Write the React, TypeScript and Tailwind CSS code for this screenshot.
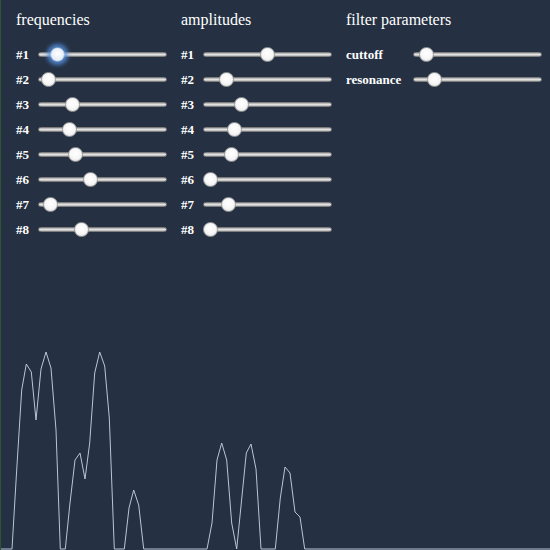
import React from 'react';

const freqs = [12, 3, 27, 24, 30, 45, 5, 36];
const amps = [57, 16, 31, 24, 21, 0, 18, 0];
const filters = [
    { label: 'cuttoff', pos: 6 },
    { label: 'resonance', pos: 14 },
];

// spectrum points, x / y in page pixels (graph origin at y=350)
const spectrum: [number, number][] = [
    [0, 549], [11, 549], [15.7, 470], [20.7, 390], [25.3, 364], [30.3, 372], [35, 420], [40, 369],
    [45, 352], [50, 368], [55, 430], [59.3, 549], [64.3, 549], [69, 503], [74, 460], [79, 453],
    [84, 479], [88.7, 443], [93.7, 373], [98.7, 352], [103.7, 366], [108.3, 418], [113.3, 549],
    [123.3, 549], [128, 508], [132.7, 490], [137.7, 505], [142.7, 549], [206, 549], [211, 523],
    [216, 460], [220.7, 443], [225.7, 460], [230.7, 523], [235.7, 549], [240.3, 503], [245.3, 453],
    [250, 444], [255, 469], [260, 549], [274.3, 549], [279.3, 498], [284, 467], [289, 473],
    [294, 512], [299, 517], [303.7, 549], [550, 549],
];

const Slider = ({ pos, focused }: { pos: number; focused?: boolean }) => (
    <div className="relative shrink-0 w-[129px] h-[15px] flex items-center">
        <div className="w-full h-[5px] rounded-full border border-[#7d7d7d] bg-[linear-gradient(to_bottom,#a9a9a9_0%,#e2e2e2_50%,#b4b4b4_100%)]"></div>
        <div
            className={
                focused
                    ? 'absolute top-0 w-[15px] h-[15px] rounded-full border border-[#8fb4e6] bg-[radial-gradient(circle_at_50%_45%,#ffffff_0%,#e8eef8_60%,#c9d6ea_100%)] shadow-[0_0_4px_3px_rgba(86,146,228,0.85)]'
                    : 'absolute top-0 w-[15px] h-[15px] rounded-full border border-[#9a9a9a] bg-[radial-gradient(circle_at_50%_40%,#ffffff_0%,#f6f6f6_55%,#d6d6d6_100%)]'
            }
            style={{ left: pos }}
        ></div>
    </div>
);

const Column = ({ title, wide, children }: { title: string; wide?: boolean; children: React.ReactNode }) => (
    <div className={wide ? 'flex-1 flex flex-col' : 'w-[165px] shrink-0 flex flex-col'}>
        <div className="text-[16px] leading-[18px] text-white">{title}</div>
        <div className="mt-[13px] flex flex-col">{children}</div>
    </div>
);

export default function App() {
    const d = spectrum.map(([x, y], i) => `${i === 0 ? 'M' : 'L'}${x} ${y - 350}`).join(' ');

    return (
        <div className="w-[550px] h-[550px] bg-[#253142] border-l border-[#2a5636] flex flex-col overflow-hidden" style={{ fontFamily: '"Liberation Serif", "Times New Roman", serif' }}>
            <div className="flex pl-[15px] pt-[11px]">
                <Column title="frequencies">
                    {freqs.map((p, i) => (
                        <div key={i} className="h-[25px] flex items-center">
                            <span className="w-[22px] shrink-0 text-[13px] font-bold text-white">#{i + 1}</span>
                            <Slider pos={p} focused={i === 0} />
                        </div>
                    ))}
                </Column>
                <Column title="amplitudes">
                    {amps.map((p, i) => (
                        <div key={i} className="h-[25px] flex items-center">
                            <span className="w-[22px] shrink-0 text-[13px] font-bold text-white">#{i + 1}</span>
                            <Slider pos={p} />
                        </div>
                    ))}
                </Column>
                <Column title="filter parameters" wide>
                    {filters.map((f) => (
                        <div key={f.label} className="h-[25px] flex items-center">
                            <span className="w-[67px] shrink-0 text-[13px] font-bold text-white">{f.label}</span>
                            <Slider pos={f.pos} />
                        </div>
                    ))}
                </Column>
            </div>
            <svg className="mt-auto block" width="550" height="200" viewBox="0 0 550 200">
                <path d={d} fill="none" stroke="#b9c6d6" strokeWidth="1" />
            </svg>
        </div>
    );
}
